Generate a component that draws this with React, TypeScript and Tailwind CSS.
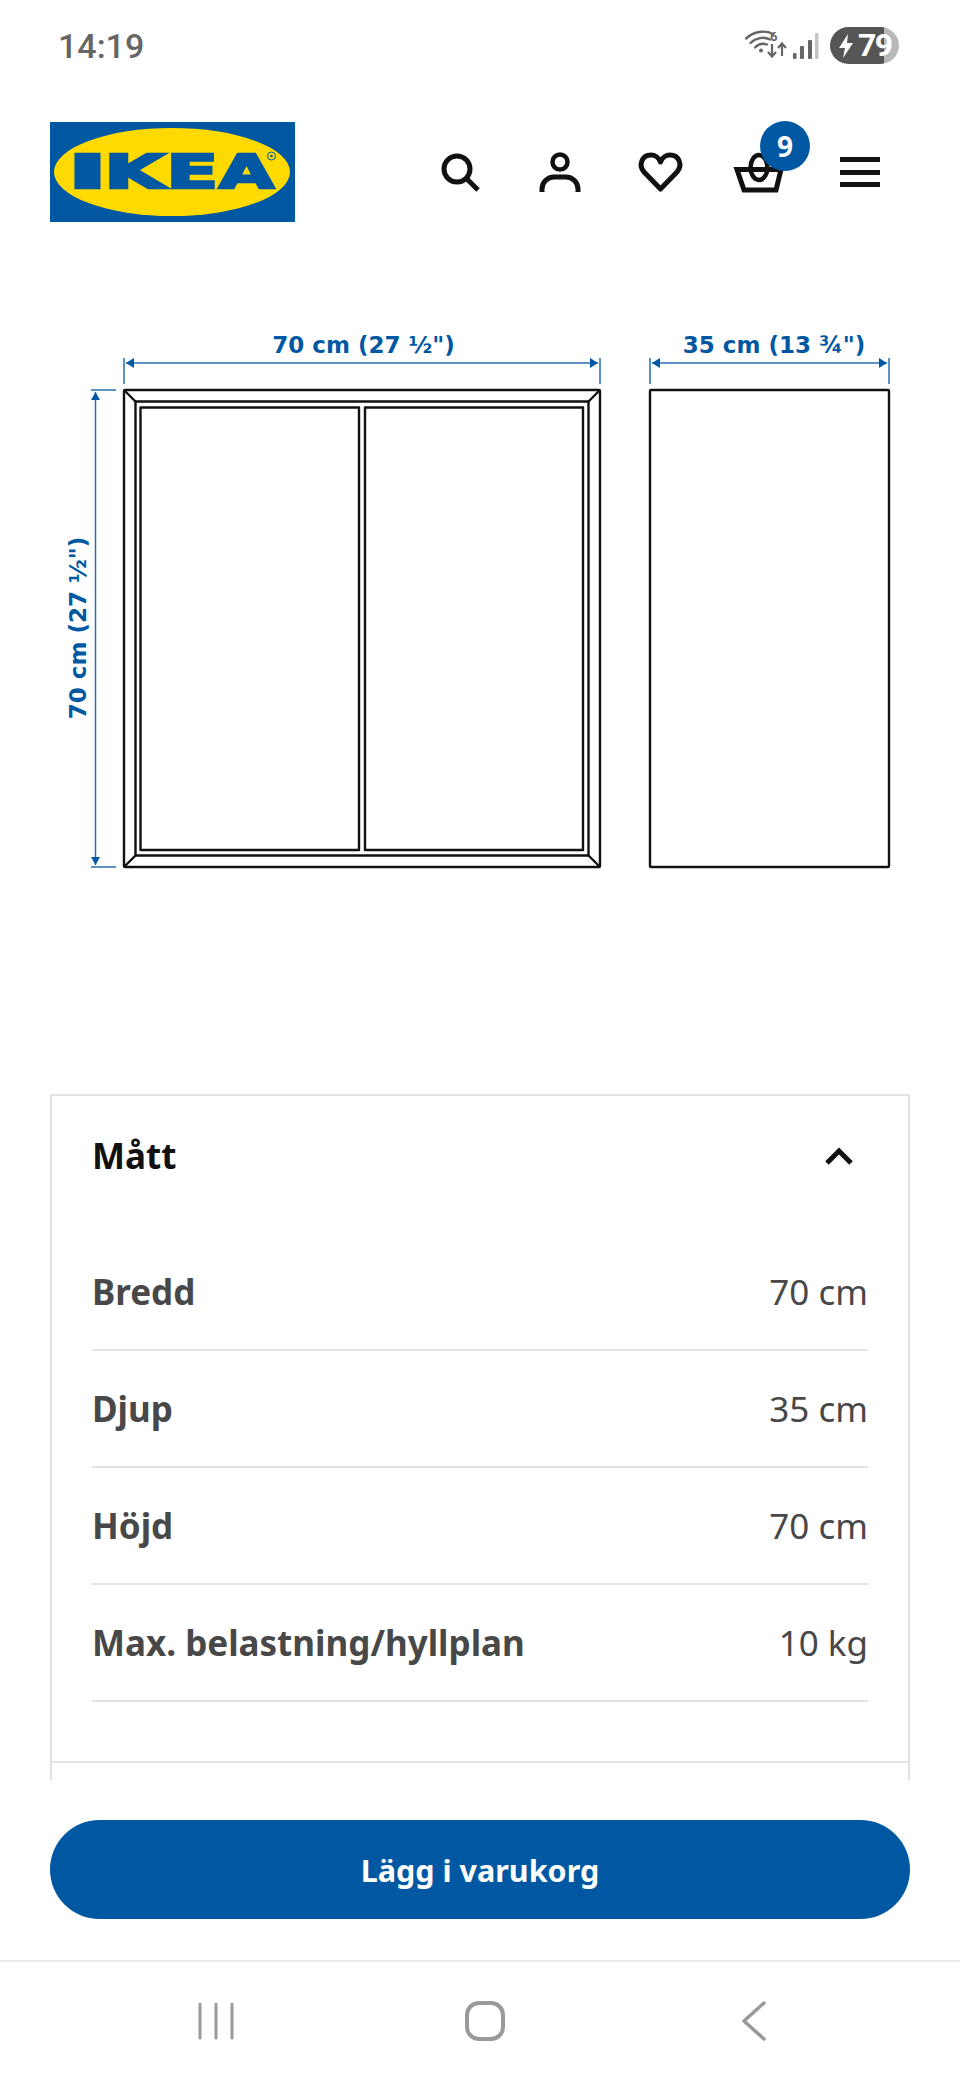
import React from "react";

const rows = [
  ["Bredd", "70 cm"],
  ["Djup", "35 cm"],
  ["Höjd", "70 cm"],
  ["Max. belastning/hyllplan", "10 kg"],
];

function StatusIcons() {
  return (
    <svg width="76" height="34" viewBox="0 0 76 34" fill="none" className="block">
      <g stroke="#666" strokeWidth="2.4" strokeLinecap="round">
        <path d="M1 9.5C9 2 20 1 28 5" />
        <path d="M5.5 14C11 8.5 19 7.5 25 10.5" />
        <path d="M10 18.5C13.5 15 18 14 22 15.5" />
      </g>
      <circle cx="16" cy="21.5" r="2" fill="#666" />
      <text x="25" y="12" fontSize="13" fontWeight="700" fill="#666" fontFamily="Roboto, sans-serif">6</text>
      <g stroke="#666" strokeWidth="2.2" fill="none">
        <path d="M27 15V27M23 23L27 27.5L31 23" />
        <path d="M37 27V15M33 19L37 14.5L41 19" />
      </g>
      <rect x="48" y="24" width="3.5" height="6" rx="1" fill="#666" />
      <rect x="55" y="17" width="4" height="13" rx="1" fill="#666" />
      <rect x="63" y="11" width="4" height="19" rx="1" fill="#666" />
      <rect x="70" y="4" width="3.5" height="26" rx="1" fill="#c4c4c4" />
    </svg>
  );
}

function Logo() {
  return (
    <svg width="245" height="100" viewBox="0 0 245 100" className="block">
      <rect width="245" height="100" fill="#0058a3" />
      <ellipse cx="122" cy="50" rx="118" ry="44" fill="#ffda00" />
      <g
        fontFamily="'DejaVu Sans', sans-serif"
        fontWeight="700"
        fontSize="46"
        fill="#0058a3"
        stroke="#0058a3"
        strokeWidth="2.5"
      >
        <text x="17.5" y="65.75" textLength="40" lengthAdjust="spacingAndGlyphs">I</text>
        <text x="54.2" y="65.75" textLength="60.6" lengthAdjust="spacingAndGlyphs">K</text>
        <text x="116.3" y="65.75" textLength="52" lengthAdjust="spacingAndGlyphs">E</text>
        <text x="169" y="65.75" textLength="55" lengthAdjust="spacingAndGlyphs">A</text>
      </g>
      <circle cx="221.5" cy="34" r="4" fill="#ffda00" stroke="#0058a3" strokeWidth="1" />
      <circle cx="221.5" cy="34" r="1.3" fill="#0058a3" />
    </svg>
  );
}

function HeaderIcon({ children }: { children: React.ReactNode }) {
  return (
    <div className="relative flex h-[100px] w-[100px] items-center justify-center">
      <svg width="60" height="60" viewBox="0 0 60 60" fill="none" stroke="#111" strokeWidth="5" className="block">
        {children}
      </svg>
    </div>
  );
}

function Drawing() {
  const blue = "#0058a3";
  const line = "#2a6fb0";
  return (
    <svg width="960" height="560" viewBox="0 320 960 560" fill="none" className="block">
      {/* dimension lines */}
      <g stroke={line} strokeWidth="1.5">
        <path d="M124 358V384M600 358V384M126 363H598" />
        <path d="M650 358V384M889 358V384M652 363H887" />
        <path d="M91 390H116M91 867H116M95.5 392V865" />
      </g>
      <g fill={blue}>
        <path d="M126 363L134 358V368Z" />
        <path d="M598 363L590 358V368Z" />
        <path d="M652 363L660 358V368Z" />
        <path d="M887 363L879 358V368Z" />
        <path d="M95.5 392L91 400H100Z" />
        <path d="M95.5 865L91 857H100Z" />
      </g>
      <g fontFamily="'DejaVu Sans', sans-serif" fontWeight="700" fontSize="23" fill={blue} textAnchor="middle">
        <text x="363.5" y="352.5">70 cm (27 ½")</text>
        <text x="774" y="352.5">35 cm (13 ¾")</text>
        <text transform="translate(86 628) rotate(-90)">70 cm (27 ½")</text>
      </g>
      {/* cabinet front */}
      <g stroke="#111" strokeWidth="2.4" strokeLinejoin="round">
        <rect x="124" y="390" width="476" height="477" rx="1" />
        <rect x="135.5" y="401.5" width="453" height="454" />
        <path d="M124 390L135.5 401.5M600 390L588.5 401.5M124 867L135.5 855.5M600 867L588.5 855.5" />
        <rect x="140.5" y="407.5" width="218.5" height="442.5" />
        <rect x="365" y="407.5" width="218" height="442.5" />
      </g>
      {/* cabinet side */}
      <rect x="650" y="390" width="239" height="477" rx="1" stroke="#111" strokeWidth="2.4" />
    </svg>
  );
}

export default function App() {
  return (
    <div className="flex h-[2080px] w-[960px] flex-col overflow-hidden bg-white font-['Noto_Sans',sans-serif]">
      {/* status bar */}
      <div className="flex h-[122px] items-start justify-between pl-[58px] pr-[61px] pt-[24px]">
        <span className="font-['Roboto',sans-serif] text-[34px] leading-[44px] font-medium text-[#666]">14:19</span>
        <div className="flex items-center gap-[9px]">
          <div className="mt-[3px]">
            <StatusIcons />
          </div>
          <div className="mt-[3px] flex h-[37px] w-[69px] items-center gap-[3px] rounded-full bg-[linear-gradient(90deg,#555_78%,#b8b8b8_78%)] pl-[7px]">
            <svg width="18" height="26" viewBox="0 0 18 26" className="block">
              <path d="M11 1L2 15H8L6 25L16 10H10Z" fill="#fff" />
            </svg>
            <span className="font-['Roboto',sans-serif] text-[32px] leading-[37px] font-bold tracking-[-1.5px] text-white">79</span>
          </div>
        </div>
      </div>

      {/* header */}
      <header className="flex h-[100px] items-center justify-between px-[50px]">
        <Logo />
        <div className="flex">
          <HeaderIcon>
            <circle cx="27" cy="27" r="13" />
            <path d="M37 37L48 48" />
          </HeaderIcon>
          <HeaderIcon>
            <circle cx="30" cy="20" r="7.5" strokeWidth="4.5" />
            <path d="M12 50V47A12 12 0 0 1 24 35H36A12 12 0 0 1 48 47V50" />
          </HeaderIcon>
          <HeaderIcon>
            <path d="M30.5 47L14 30C8 23 12 13 21 13C25 13 29 16 30.5 20C32 16 36 13 40 13C49 13 53 23 47 30Z" strokeLinejoin="round" />
          </HeaderIcon>
          <div className="relative">
            <HeaderIcon>
              <path d="M7 27.5H51L46 48H14Z" />
              <ellipse cx="29" cy="25.5" rx="8.5" ry="12.5" strokeWidth="4.5" />
            </HeaderIcon>
            <div className="absolute left-[50px] top-[-1px] flex h-[50px] w-[50px] items-center justify-center rounded-full bg-[#0058a3] text-[28px] font-bold text-white">
              9
            </div>
          </div>
          <div className="flex h-[100px] w-[100px] items-center justify-center">
            <div className="flex w-[40px] flex-col gap-[7.5px]">
              <div className="h-[5px] bg-[#111]" />
              <div className="h-[5px] bg-[#111]" />
              <div className="h-[5px] bg-[#111]" />
            </div>
          </div>
        </div>
      </header>

      {/* product drawing */}
      <div className="mt-[98px]">
        <Drawing />
      </div>

      {/* dimensions card */}
      <div className="mx-[50px] mt-[214px] flex-1 overflow-hidden border-x-2 border-t-2 border-[#e2e2e2]">
        <section className="border-b-2 border-[#e2e2e2] px-[40px] pb-[59px]">
          <div className="flex h-[122px] items-center justify-between pb-[2px]">
            <h2 className="text-[35px] font-bold text-[#111]">Mått</h2>
            <svg width="30" height="20" viewBox="0 0 30 20" fill="none" stroke="#111" strokeWidth="5" className="mr-[14px] block">
              <path d="M3 17L15 5L27 17" />
            </svg>
          </div>
          <div className="pt-[16px]">
            {rows.map(([label, value]) => (
              <div key={label} className="flex h-[117px] items-center justify-between border-b-2 border-[#e2e2e2] pt-[1px] text-[35px] text-[#484848]">
                <span className="font-bold">{label}</span>
                <span>{value}</span>
              </div>
            ))}
          </div>
        </section>
        <div className="h-[60px]" />
      </div>

      {/* add to cart */}
      <div className="h-[180px] px-[50px] pt-[40px]">
        <button className="flex h-[99px] w-full items-center justify-center rounded-full bg-[#0058a3] pt-[2px] text-[30.5px] font-bold text-white">
          Lägg i varukorg
        </button>
      </div>

      {/* navigation bar */}
      <nav className="flex h-[120px] items-center justify-center border-t-2 border-[#eaeaea]">
        <div className="ml-[4px] flex w-[568px] items-center justify-between">
          <svg width="36" height="38" viewBox="0 0 36 38" fill="none" stroke="#999" strokeWidth="3" strokeLinecap="round" className="block">
            <path d="M2 2V36M18 2V36M34 2V36" />
          </svg>
          <svg width="40" height="40" viewBox="0 0 40 40" fill="none" stroke="#999" strokeWidth="4" className="mr-[5px] block">
            <rect x="2" y="2" width="36" height="36" rx="12" />
          </svg>
          <svg width="25" height="40" viewBox="0 0 25 40" fill="none" stroke="#999" strokeWidth="3.5" strokeLinecap="round" strokeLinejoin="round" className="block">
            <path d="M23 2L3 20L23 38" />
          </svg>
        </div>
      </nav>
    </div>
  );
}
